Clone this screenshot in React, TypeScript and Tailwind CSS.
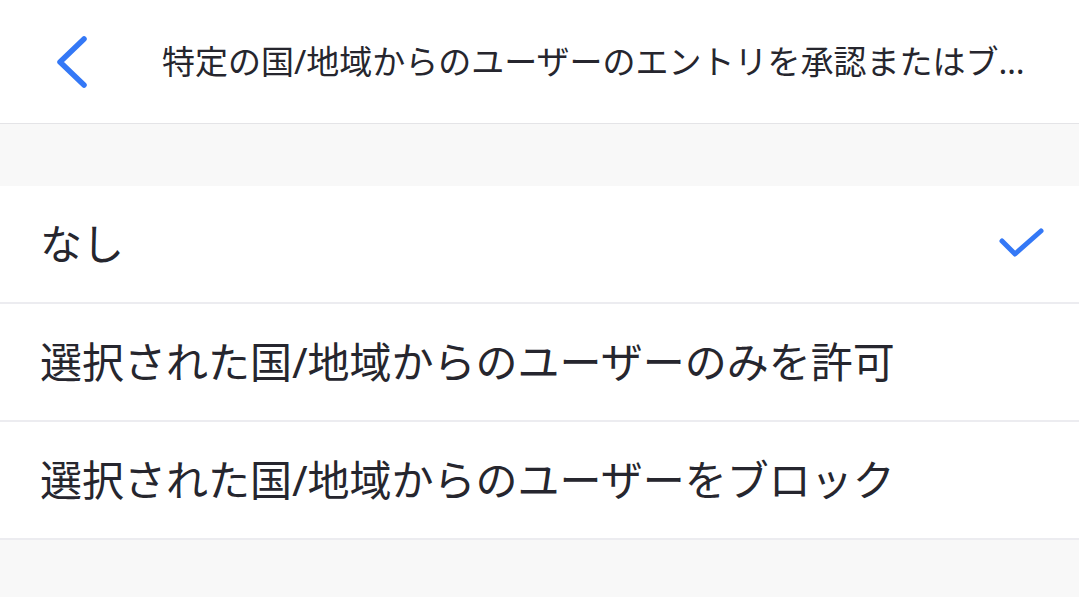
import React from "react";

const options = [
  { label: "なし", selected: true },
  { label: "選択された国/地域からのユーザーのみを許可", selected: false },
  { label: "選択された国/地域からのユーザーをブロック", selected: false },
];

function BackIcon() {
  return (
    <svg width="36" height="56" viewBox="0 0 36 56" fill="none" className="shrink-0">
      <path d="M29 5 L5 28 L29 51" stroke="#3478f6" strokeWidth="5.5" strokeLinecap="round" strokeLinejoin="round" />
    </svg>
  );
}

function CheckIcon() {
  return (
    <svg width="50" height="40" viewBox="0 0 50 40" fill="none" className="shrink-0">
      <path d="M5 17 L18 30 L44 7" stroke="#3478f6" strokeWidth="5" strokeLinecap="round" strokeLinejoin="round" />
    </svg>
  );
}

export default function App() {
  return (
    <div
      className="flex h-[597px] w-[1079px] flex-col overflow-hidden bg-[#f8f8f8] text-[#26262e]"
      style={{ fontFamily: '"Noto Sans", "Noto Sans CJK JP", sans-serif' }}
    >
      <header className="flex h-[124px] shrink-0 items-center border-b border-[#e4e4e7] bg-white pl-[55px] pr-[30px]">
        <BackIcon />
        <h1 className="ml-[71px] flex-1 whitespace-nowrap text-[33px] font-normal leading-none">
          特定の国/地域からのユーザーのエントリを承認またはブ…
        </h1>
      </header>

      <div className="h-[62px] shrink-0" />

      <ul className="bg-white">
        {options.map((opt) => (
          <li
            key={opt.label}
            className="flex h-[118px] items-center justify-between border-b-2 border-[#ececf0] pl-[40px] pr-[32px]"
          >
            <span className="text-[42px] leading-none">{opt.label}</span>
            {opt.selected && <CheckIcon />}
          </li>
        ))}
      </ul>
    </div>
  );
}
